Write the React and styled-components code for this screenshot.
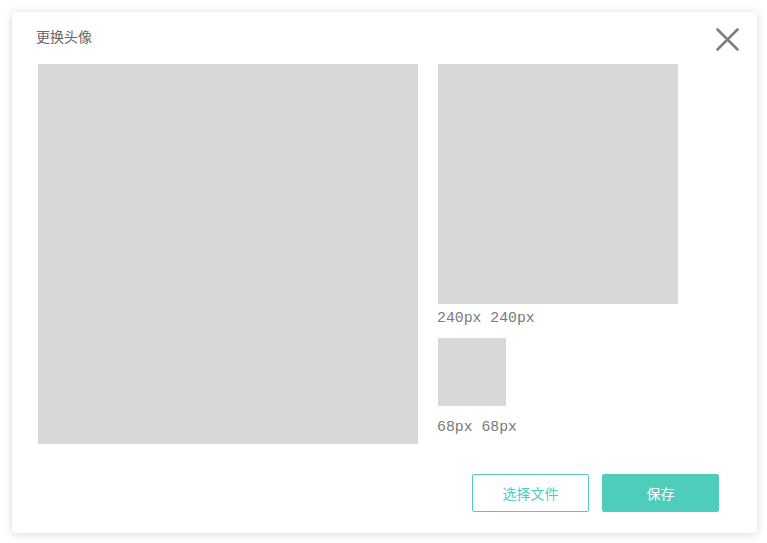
import React from "react";
import styled, { createGlobalStyle } from "styled-components";

const Global = createGlobalStyle`
  html, body { margin: 0; padding: 0; background: #fff; }
  body { font-family: "Noto Sans CJK SC", "Noto Sans", sans-serif; }
`;

const Page = styled.div`
  padding: 12px 10px 10px 12px;
`;

const Dialog = styled.div`
  position: relative;
  box-sizing: border-box;
  width: 745px;
  height: 521px;
  background: #fff;
  border-radius: 4px;
  box-shadow: 0 1px 10px rgba(0, 0, 0, 0.16);
  padding: 0 38px 0 24px;
  display: flex;
  flex-direction: column;
`;

const Header = styled.div`
  height: 52px;
  box-sizing: border-box;
  padding-top: 14px;
`;

const Title = styled.div`
  font-size: 14px;
  line-height: 20px;
  color: #666;
`;

const Close = styled.button`
  position: absolute;
  top: 16px;
  right: 18px;
  width: 23px;
  height: 23px;
  padding: 0;
  border: 0;
  background: none;
  cursor: pointer;
  display: block;
`;

const Body = styled.div`
  display: flex;
  gap: 20px;
  margin-left: 2px;
`;

const CropBox = styled.div`
  width: 380px;
  height: 380px;
  background: #d8d8d8;
`;

const Previews = styled.div`
  display: flex;
  flex-direction: column;
  align-items: flex-start;
`;

const Preview = styled.div`
  width: ${(p) => p.$size}px;
  height: ${(p) => p.$size}px;
  background: #d8d8d8;
`;

const Label = styled.div`
  font-family: "Liberation Mono", "Courier New", monospace;
  font-size: 14.8px;
  line-height: 20px;
  color: #7a7a7a;
  margin: ${(p) => p.$top}px 0 ${(p) => p.$bottom}px -1px;
`;

const Footer = styled.div`
  display: flex;
  justify-content: flex-end;
  gap: 13px;
  margin-top: 30px;
`;

const Button = styled.button`
  box-sizing: border-box;
  width: 117px;
  height: 38px;
  border-radius: 2px;
  font-family: "Noto Sans CJK SC", "Noto Sans", sans-serif;
  font-size: 14px;
  cursor: pointer;
  border: 1px solid #4ecdbb;
  background: ${(p) => (p.$primary ? "#4ecdbb" : "#fff")};
  color: ${(p) => (p.$primary ? "#fff" : "#4ecdbb")};
`;

export default function App() {
  return (
    <Page>
      <Global />
      <Dialog>
        <Header>
          <Title>更换头像</Title>
        </Header>
        <Close aria-label="close">
          <svg width="23" height="23" viewBox="0 0 23 23">
            <path d="M1.5 1.5 L21.5 21.5 M21.5 1.5 L1.5 21.5" stroke="#7f7f7f" strokeWidth="2.6" strokeLinecap="round" />
          </svg>
        </Close>
        <Body>
          <CropBox />
          <Previews>
            <Preview $size={240} />
            <Label $top={4} $bottom={10}>240px 240px</Label>
            <Preview $size={68} />
            <Label $top={11} $bottom={0}>68px 68px</Label>
          </Previews>
        </Body>
        <Footer>
          <Button>选择文件</Button>
          <Button $primary>保存</Button>
        </Footer>
      </Dialog>
    </Page>
  );
}
